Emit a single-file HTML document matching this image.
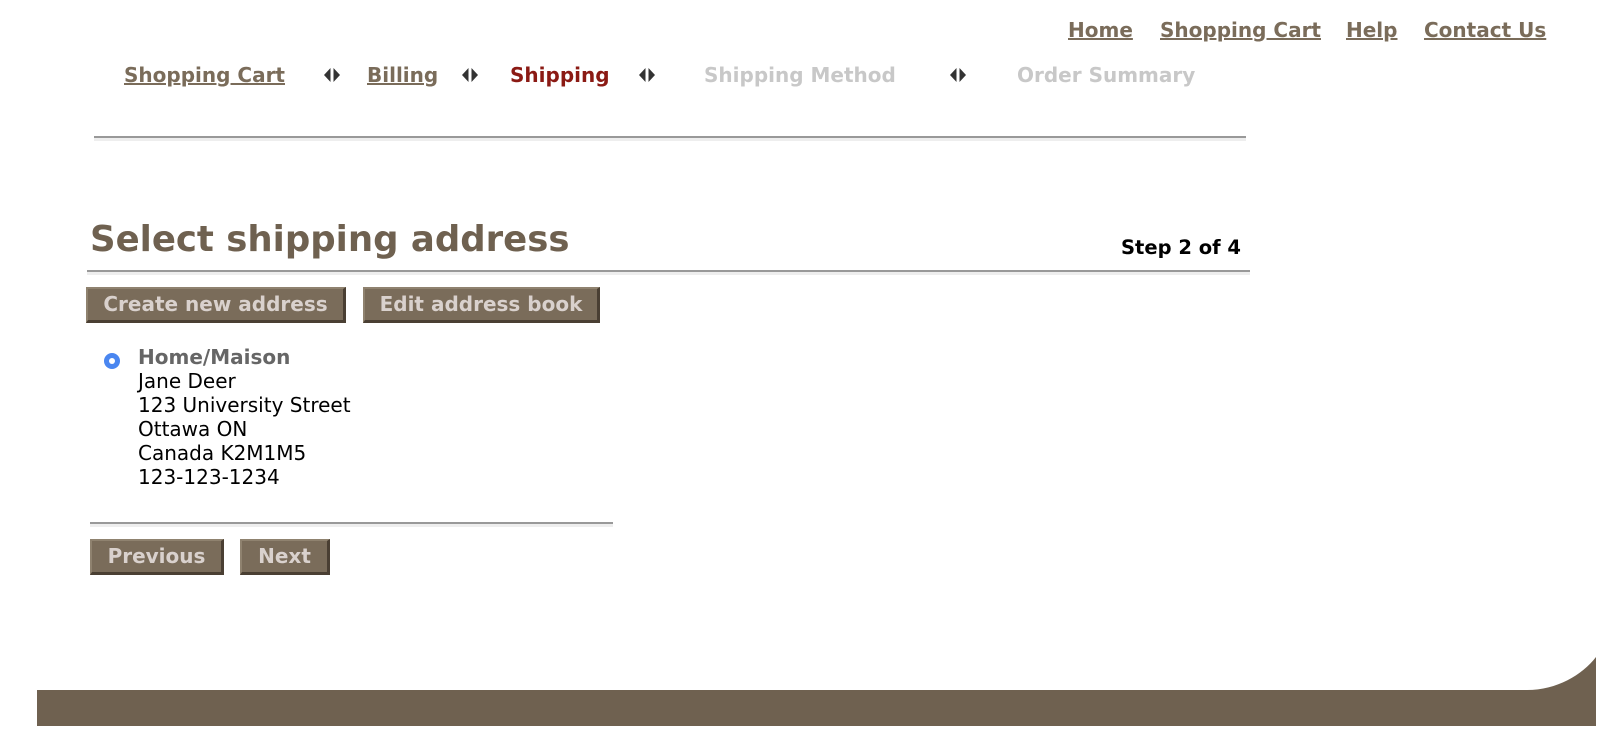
<!DOCTYPE html>
<html><head><meta charset="utf-8"><style>
body{margin:0;width:1608px;height:742px;background:#fff;position:relative;overflow:hidden;font-family:"DejaVu Sans","Liberation Sans",sans-serif}
.a{position:absolute;white-space:nowrap}
.tn{font-weight:bold;font-size:20px;color:#7a6c5a;text-decoration:underline;top:18px}
.st{font-weight:bold;font-size:20px;top:63px}
.lk{color:#7a6c5a;text-decoration:underline}
.dis{color:#c8c8c8}
.arr{top:67px;width:20px;height:16px}
.hr{position:absolute;height:2px;background:#999;border-bottom:3px solid #eee}
.btn{position:absolute;background:#7a6c5a;border-top:2px solid #8f826f;border-left:2px solid #8f826f;border-right:3px solid #4a3f33;border-bottom:3px solid #4a3f33;box-sizing:border-box;color:#d9d1cd;font-weight:bold;font-size:20px;text-align:center;line-height:30px}
.ad{font-size:20px;color:#000;left:138px}
</style></head><body>
<span class="a tn" style="left:1068px">Home</span>
<span class="a tn" style="left:1160px">Shopping Cart</span>
<span class="a tn" style="left:1346px">Help</span>
<span class="a tn" style="left:1424px">Contact Us</span>

<span class="a st lk" style="left:124px">Shopping Cart</span>
<svg class="a arr" style="left:322px" viewBox="0 0 20 16"><path d="M8.5 1L2 8l6.5 7zM11.5 1L18 8l-6.5 7z" fill="#333"/></svg>
<span class="a st lk" style="left:367px">Billing</span>
<svg class="a arr" style="left:460px" viewBox="0 0 20 16"><path d="M8.5 1L2 8l6.5 7zM11.5 1L18 8l-6.5 7z" fill="#333"/></svg>
<span class="a st" style="color:#8b1a14;left:510px">Shipping</span>
<svg class="a arr" style="left:637px" viewBox="0 0 20 16"><path d="M8.5 1L2 8l6.5 7zM11.5 1L18 8l-6.5 7z" fill="#333"/></svg>
<span class="a st dis" style="left:704px">Shipping Method</span>
<svg class="a arr" style="left:948px" viewBox="0 0 20 16"><path d="M8.5 1L2 8l6.5 7zM11.5 1L18 8l-6.5 7z" fill="#333"/></svg>
<span class="a st dis" style="left:1017px">Order Summary</span>

<div class="hr" style="left:94px;width:1152px;top:136px"></div>

<span class="a" style="left:90px;top:219px;font-size:35.5px;font-weight:bold;color:#6f6150">Select shipping address</span>
<span class="a" style="left:1121px;top:236px;font-size:19.5px;font-weight:bold;color:#000">Step 2 of 4</span>
<div class="hr" style="left:87px;width:1163px;top:270px"></div>

<div class="btn" style="left:86px;top:287px;width:260px;height:36px">Create new address</div>
<div class="btn" style="left:363px;top:287px;width:237px;height:36px">Edit address book</div>

<div class="a" style="left:104px;top:353px;width:16px;height:16px;border-radius:50%;background:#4a86f0"></div>
<div class="a" style="left:109px;top:358px;width:6px;height:6px;border-radius:50%;background:#fff"></div>
<span class="a" style="left:138px;top:345px;font-size:20px;font-weight:bold;color:#666">Home/Maison</span>
<span class="a ad" style="top:369px">Jane Deer</span>
<span class="a ad" style="top:393px">123 University Street</span>
<span class="a ad" style="top:417px">Ottawa ON</span>
<span class="a ad" style="top:441px">Canada K2M1M5</span>
<span class="a ad" style="top:465px">123-123-1234</span>

<div class="hr" style="left:90px;width:523px;top:522px"></div>
<div class="btn" style="left:90px;top:539px;width:134px;height:36px">Previous</div>
<div class="btn" style="left:240px;top:539px;width:90px;height:36px">Next</div>

<svg class="a" style="left:37px;top:650px" width="1559" height="77" viewBox="0 0 1559 77"><path d="M0 40H1490C1520 40 1545 25 1559 7V76H0Z" fill="#6f6150"/></svg>
</body></html>
